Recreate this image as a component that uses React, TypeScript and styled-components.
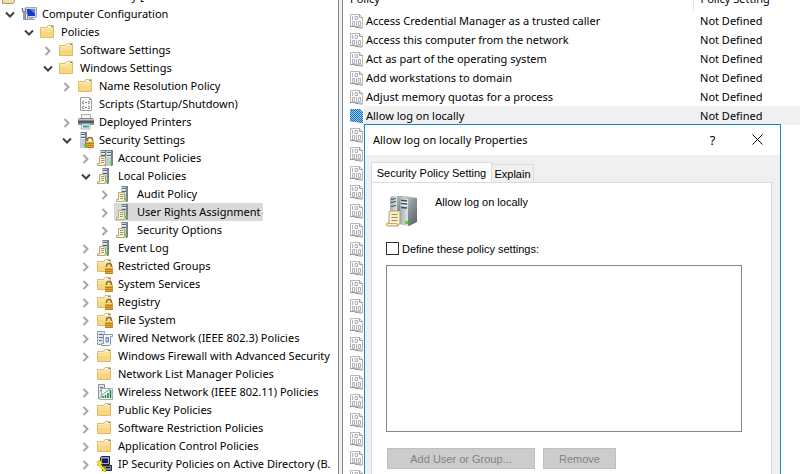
import React from 'react';
import styled, { createGlobalStyle } from 'styled-components';

const GlobalStyle = createGlobalStyle`
  * { box-sizing: border-box; }
  body { margin: 0; background: #fff; overflow: hidden; }
  #root { height: 100vh; }
  button, input, select { font: inherit; color: inherit; }
`;

const Console = styled.div`
  display: flex;
  height: 100vh;
  overflow: hidden;
  color: #000;
  font: 11px/18px 'Noto Sans', sans-serif;
`;

const TreePane = styled.nav`
  flex: 0 0 339px;
  overflow: hidden;
  border-right: 1px solid #828790;
`;

const Splitter = styled.div`
  flex: 0 0 3px;
  background: #f0f0f0;
`;

const Tree = styled.ul`
  margin: 0;
  padding: 0;
  list-style: none;
`;

const TreeRow = styled.li<{ $level: number; $clipped?: boolean }>`
  display: flex;
  align-items: ${(p) => (p.$clipped ? 'flex-end' : 'center')};
  height: ${(p) => (p.$clipped ? 5 : 18)}px;
  padding-left: ${(p) => (p.$clipped ? 0 : p.$level * 19 + 2)}px;
  overflow: hidden;
  white-space: nowrap;
`;

const Toggle = styled.button`
  flex: 0 0 15px;
  height: 18px;
  margin-right: 2px;
  padding: 0;
  border: 0;
  background: none;
  svg { display: block; }
`;

const ToggleGap = styled.span`
  flex: 0 0 17px;
`;

const TreeItem = styled.span<{ $selected?: boolean }>`
  display: flex;
  align-items: center;
  gap: 5px;
  height: 18px;
  padding: 0 2px;
  background: ${(p) => (p.$selected ? '#d9d9d9' : 'transparent')};
  svg { flex: none; }
`;

const ListPane = styled.main`
  position: relative;
  flex: 1;
  min-width: 0;
  overflow: hidden;
  border-left: 1px solid #828790;
`;

const PolicyTable = styled.table`
  width: 100%;
  table-layout: fixed;
  border-collapse: collapse;
  text-align: left;
`;

const IconColumn = styled.col`
  width: 21px;
`;

const NameColumn = styled.col`
  width: 329px;
`;

const HeadCell = styled.th<{ $divided?: boolean }>`
  padding: 0;
  font-weight: 400;
  border-right: ${(p) => (p.$divided ? '1px solid #e5e5e5' : '0')};
`;

const HeadLabel = styled.div<{ $inset: number }>`
  display: flex;
  align-items: flex-end;
  height: 11px;
  padding: 0 0 3px ${(p) => p.$inset}px;
  overflow: hidden;
`;

const PolicyRow = styled.tr`
  height: 19px;
`;

const IconCell = styled.td`
  padding: 0 0 0 7px;
  svg { display: block; }
`;

const TextCell = styled.td<{ $inset: number; $selected?: boolean }>`
  padding: 0 0 0 ${(p) => p.$inset}px;
  background: ${(p) => (p.$selected ? '#f0f0f0' : 'transparent')};
  white-space: nowrap;
`;

const Dialog = styled.section`
  position: absolute;
  top: 124px;
  right: 19px;
  bottom: 0;
  left: 21px;
  display: flex;
  flex-direction: column;
  background: #f0f0f0;
  border: 1px solid #1883d7;
  border-bottom: 0;
`;

const TitleBar = styled.header`
  display: flex;
  align-items: center;
  height: 30px;
  padding-left: 8px;
  background: #fff;
`;

const Title = styled.h1`
  flex: 1;
  margin: 0;
  font: inherit;
`;

const CaptionButton = styled.button`
  display: flex;
  align-items: center;
  justify-content: center;
  width: 45px;
  height: 30px;
  padding: 0 0 1px;
  border: 0;
  background: none;
`;

const HelpMark = styled.span`
  font-size: 13px;
`;

const TabArea = styled.div`
  display: flex;
  flex: 1;
  flex-direction: column;
  padding: 7px 8px 0 6px;
  font: 11px/14px 'Liberation Sans', sans-serif;
`;

const TabList = styled.div`
  display: flex;
  align-items: flex-end;
`;

const Tab = styled.button<{ $active?: boolean }>`
  height: ${(p) => (p.$active ? 21 : 18)}px;
  width: ${(p) => (p.$active ? 121 : 42)}px;
  margin-bottom: ${(p) => (p.$active ? -1 : 0)}px;
  padding: 0;
  border: 1px solid #dcdcdc;
  border-bottom: 0;
  border-left-width: ${(p) => (p.$active ? 1 : 0)}px;
  background: ${(p) => (p.$active ? '#fff' : '#f0f0f0')};
  white-space: nowrap;
`;

const TabPage = styled.div`
  flex: 1;
  padding: 12px 29px 0 14px;
  background: #fff;
  border: 1px solid #dcdcdc;
  border-bottom: 0;
`;

const PolicyHeading = styled.div`
  display: flex;
  gap: 16px;
  height: 47px;
`;

const PolicyName = styled.p`
  margin: 0;
`;

const CheckLabel = styled.label`
  display: flex;
  align-items: center;
  gap: 3px;
  height: 13px;
`;

const CheckBox = styled.input`
  appearance: none;
  width: 13px;
  height: 13px;
  margin: 0;
  border: 1px solid #333;
  background: #fff;
`;

const AccountList = styled.select`
  display: block;
  width: 100%;
  height: 167px;
  margin: 10px 0 16px;
  border: 1px solid #828790;
  border-radius: 0;
  background: #fff;
`;

const ButtonRow = styled.div`
  display: flex;
  gap: 8px;
  padding-left: 1px;
`;

const PushButton = styled.button<{ $wide?: boolean }>`
  width: ${(p) => (p.$wide ? 148 : 73)}px;
  height: 21px;
  padding: 0;
  border: 1px solid #bfbfbf;
  background: #ccc;
  color: #838383;
`;

/* ---------- icons ---------- */

const Chevron = ({ open }: { open: boolean }) => (
  <svg width="15" height="18" fill="none" strokeWidth="2">
    {open ? <path d="M4 7.500l4 4 4-4" stroke="#404040" /> : <path d="M5.500 6l4 4-4 4" stroke="#a6a6a6" />}
  </svg>
);

const FolderShape = () => (
  <g>
    <path d="M.5 3.500H6.500L8 1.500H13.500V13.500H.5Z" fill="#fbdf96" stroke="#dfba68" />
    <path d="M1 8H13V13H1Z" fill="#f8d57f" />
    <path d="M1 4.500H7L8.500 3.500H13" stroke="#fdedbd" fill="none" />
    <path d="M8 2.500H11" stroke="#fff" />
    <path d="M11 2.500H13" stroke="#3f97e0" />
  </g>
);

const LockShape = () => (
  <g>
    <path d="M9.500 10V8Q9.500 5.500 12 5.500T14.500 8V10" fill="none" stroke="#8d7440" strokeWidth="1.500" />
    <rect x="8" y="9" width="8" height="7" fill="#dfa935" />
    <path d="M8 11.500H16M8 13.500H16M8 15.500H16" stroke="#b98118" />
    <path d="M8 9.500H15" stroke="#f7d983" />
  </g>
);

const TowerShape = ({ x = 5 }: { x?: number }) => (
  <g transform={`translate(${x} 0)`}>
    <path d="M0 1L1 0H7V15L6 16H0Z" fill="#75838c" />
    <path d="M0 1H5V16H0Z" fill="#c3ced4" />
    <path d="M1 2.500H5M1 5.500H5" stroke="#566975" />
    <path d="M1 3.500H5M1 6.500H5" stroke="#f2f6f8" />
    <rect x="4" y="12" width="2" height="2" fill="#3fe018" />
  </g>
);

const ScrollShape = () => (
  <g>
    <path d="M2.500 6.500H8.500V13.500L7.500 15.500H.5V13.500H2.500Z" fill="#fbf2d8" stroke="#b9a67c" />
    <path d="M4 8.500H7.500M4 10.500H7.500M4 12.500H7" stroke="#a5946e" />
  </g>
);

type IconKind =
  | 'computer' | 'folder' | 'script' | 'printer' | 'serverLock' | 'servers' | 'server'
  | 'folderLock' | 'wired' | 'wireless' | 'ipsec' | 'scroll';

const drawings: Record<IconKind, React.ReactNode> = {
  folder: <FolderShape />,
  folderLock: <g><FolderShape /><LockShape /></g>,
  serverLock: <g><TowerShape x={2} /><LockShape /></g>,
  server: <g><TowerShape x={5} /><ScrollShape /></g>,
  servers: <g><TowerShape x={3} /><TowerShape x={9} /><ScrollShape /></g>,
  scroll: (
    <g>
      <path d="M3 0H14V10H3Z" fill="#f6e8bd" />
      <path d="M.5 10.500H11.500L12.500 9V13.500L11.500 15.500H.5Z" fill="#f0dfae" stroke="#b59a60" />
    </g>
  ),
  computer: (
    <g>
      <path d="M4.500 1.500H15.500V11.500H4.500Z" fill="#d5dbe2" stroke="#a2acb6" />
      <path d="M6 3H14V10H6Z" fill="#143bce" />
      <path d="M9 3H14V8Z" fill="#5f87f4" />
      <path d="M8 12H12V13H14V14H6V13H8Z" fill="#9ca6b0" />
      <path d="M1.500 2V5L3 6.500 4.500 5V2M3 6V14" fill="none" stroke="#6c8191" strokeWidth="1.500" />
      <path d="M4.500 7.500H6.500V13.500H4.500Z" fill="#eef3f7" stroke="#7d8d9b" />
    </g>
  ),
  script: (
    <g>
      <path d="M2.500 1.500H11.500L13.500 3.500V14.500H2.500Z" fill="#fafafa" stroke="#a0a0a0" />
      <path d="M11.500 1.500V3.500H13.500" fill="none" stroke="#929292" />
      <path d="M6 5L4 6.500 6 8M10 5L12 6.500 10 8M7 6.500H9M6 10L4 11.500 6 13M10 10L12 11.500 10 13M7 11.500H9" fill="none" stroke="#777" />
    </g>
  ),
  printer: (
    <g>
      <path d="M3.500 4V.5H12.500V4" fill="#f4f4f4" stroke="#b0b0b0" />
      <path d="M1 4H15L16 6V11H0V6Z" fill="#85898e" />
      <path d="M1 5H15V6H1Z" fill="#c3c7cb" />
      <path d="M0 7H16V9H0Z" fill="#54585e" />
      <path d="M4 10H12V15H3Z" fill="#f0f5fa" stroke="#a8b0b8" />
      <path d="M5 12.500H8" stroke="#2f93d2" strokeWidth="2" />
      <path d="M8 12.500H11" stroke="#4aa878" strokeWidth="2" />
      <path d="M13 10H15" stroke="#64dd37" />
    </g>
  ),
  wired: (
    <g>
      <path d="M.5 1.500H7.500V14.500H.5Z" fill="#dce4ea" stroke="#6d7c88" strokeDasharray="2 1" />
      <path d="M2 4.500H6M2 7.500H6M2 10.500H5" stroke="#5f7382" />
      <path d="M6.500 4.500H15.500V6.500H13.500V14.500L12.500 15.500H4.500V13.500H6.500Z" fill="#f7f8f9" stroke="#8796a2" />
      <path d="M9 7.500H11.500V12H9Z" fill="#bdd0e8" stroke="#5e86bc" />
    </g>
  ),
  wireless: (
    <g>
      <path d="M1.500 .5H7.500V14.500H1.500Z" fill="#dce4ea" stroke="#84919c" />
      <path d="M3 3.500H6M3 6.500H6" stroke="#5f7382" />
      <path d="M4.500 4.500H15.500V15.500H2.500V13.500H4.500Z" fill="#f5f7f5" stroke="#9fb0a5" />
      <path d="M6 14V12M8.500 14V11M11 14V9M13.500 14V6" stroke="#177a42" strokeWidth="1.500" />
      <path d="M5 11L13 5" stroke="#58b37b" />
    </g>
  ),
  ipsec: (
    <g>
      <path d="M3.500 1.500L4.500 .5H12.500V8.500H3.500Z" fill="#a4a8b4" stroke="#23252f" />
      <path d="M5 2.500H11V7H5Z" fill="#15157c" />
      <path d="M5.500 9.500H14.500V14.500H5.500Z" fill="#85858e" stroke="#23252f" />
      <path d="M9 11.500H13" stroke="#111" />
      <path d="M0 6L1 5H4L5 7 4 9 9 14 9 15.500 7 15.500 2.500 10 0 9L2 7.500Z" fill="#fff000" stroke="#9a8b00" strokeWidth=".5" />
    </g>
  ),
};

const TreeIcon = ({ kind }: { kind: IconKind }) => (
  <svg width="16" height="16" viewBox="0 0 16 16" aria-hidden="true">{drawings[kind]}</svg>
);

const PolicyIcon = ({ selected }: { selected?: boolean }) => (
  <svg width="14" height="16" viewBox="0 0 14 16" aria-hidden="true" fill="none">
    {selected && (
      <defs>
        <pattern id="dither" width="2" height="2" patternUnits="userSpaceOnUse">
          <rect width="2" height="2" fill="#a9cdea" />
          <rect width="1" height="1" fill="#0a6cb8" />
          <rect x="1" y="1" width="1" height="1" fill="#0a6cb8" />
        </pattern>
      </defs>
    )}
    {selected ? (
      <path d="M0 1H10L13 4V15H9L7 14H2L0 13Z" fill="url(#dither)" />
    ) : (
      <g>
        <path d="M.5 1.500H9.500L12.500 4.500V14.500L9.500 13.500H.5Z" fill="#fbfbfb" stroke="#b8b8b8" />
        <path d="M9.500 1.500V4.500H12.500" stroke="#a0a0a0" />
        <path d="M0 13.500H4L6 14.500H8L10 15H12.500" stroke="#999" />
        <path d="M2.500 3V7M5 3.500H7.500V6.500H5ZM2.500 8.500H4.500V12.500H2.500ZM6.500 8V13M8.500 8.500H10.500V12.500H8.500Z" stroke="#b2aebe" />
      </g>
    )}
  </svg>
);

const PropertiesIcon = () => (
  <svg width="33" height="33" viewBox="0 0 33 33" aria-hidden="true">
    <defs>
      <linearGradient id="side" x1="0" y1="0" x2="1" y2="1">
        <stop offset="0" stopColor="#dde2e4" />
        <stop offset=".5" stopColor="#8b9598" />
        <stop offset="1" stopColor="#555f62" />
      </linearGradient>
      <linearGradient id="front" x1="0" y1="0" x2="1" y2="0">
        <stop offset="0" stopColor="#a5afb3" />
        <stop offset="1" stopColor="#dce4e7" />
      </linearGradient>
    </defs>
    <path d="M4 2L6 1H19V27H4Z" fill="url(#side)" />
    <path d="M4 2L11 1V27H4Z" fill="url(#front)" />
    <path d="M5 4.500L10 3.500M5 7.500L10 6.500M5 11.500L10 10.500" stroke="#3f4d54" />
    <path d="M14 3L18 1L31 3V27L23 31L14 29Z" fill="url(#side)" />
    <path d="M14 3L22 4V31L14 29Z" fill="url(#front)" />
    <path d="M15 5.500L21 6M15 8.500L21 9M15 12.500L21 13" stroke="#3f4d54" strokeWidth="1.500" />
    <path d="M15 7L21 7.500M15 10L21 10.500" stroke="#fff" />
    <path d="M25 24L29 22M25 27L29 25" stroke="#6a7477" />
    <rect x="19" y="26" width="3" height="3" fill="#51dc16" />
    <path d="M3 17Q3 16 5 16H14V28L12 31H1Q-1 28 3 28Z" fill="#fbefc9" stroke="#b39b66" />
    <path d="M5.500 19.500H11.500M5.500 22.500H11.500M5.500 25.500H11.500" stroke="#9b8a63" />
    <path d="M2 28.500H11L12 31" fill="none" stroke="#c7ad75" />
  </svg>
);

const CloseIcon = () => (
  <svg width="11" height="11" viewBox="0 0 11 11" stroke="#000" aria-hidden="true">
    <path d="M.5 .5L10.500 10.500M10.500 .5L.5 10.500" />
  </svg>
);

/* ---------- data ---------- */

interface Node {
  level: number;
  label: string;
  icon: IconKind;
  open?: boolean;
  leaf?: boolean;
  selected?: boolean;
  clipped?: boolean;
}

const nodes: Node[] = [
  { level: 0, label: 'Default Domain Policy [', icon: 'scroll', clipped: true },
  { level: 0, label: 'Computer Configuration', icon: 'computer', open: true },
  { level: 1, label: 'Policies', icon: 'folder', open: true },
  { level: 2, label: 'Software Settings', icon: 'folder' },
  { level: 2, label: 'Windows Settings', icon: 'folder', open: true },
  { level: 3, label: 'Name Resolution Policy', icon: 'folder' },
  { level: 3, label: 'Scripts (Startup/Shutdown)', icon: 'script', leaf: true },
  { level: 3, label: 'Deployed Printers', icon: 'printer' },
  { level: 3, label: 'Security Settings', icon: 'serverLock', open: true },
  { level: 4, label: 'Account Policies', icon: 'servers' },
  { level: 4, label: 'Local Policies', icon: 'server', open: true },
  { level: 5, label: 'Audit Policy', icon: 'server' },
  { level: 5, label: 'User Rights Assignment', icon: 'server', selected: true },
  { level: 5, label: 'Security Options', icon: 'server' },
  { level: 4, label: 'Event Log', icon: 'server' },
  { level: 4, label: 'Restricted Groups', icon: 'folderLock' },
  { level: 4, label: 'System Services', icon: 'folderLock' },
  { level: 4, label: 'Registry', icon: 'folderLock' },
  { level: 4, label: 'File System', icon: 'folderLock' },
  { level: 4, label: 'Wired Network (IEEE 802.3) Policies', icon: 'wired' },
  { level: 4, label: 'Windows Firewall with Advanced Security', icon: 'folder' },
  { level: 4, label: 'Network List Manager Policies', icon: 'folder', leaf: true },
  { level: 4, label: 'Wireless Network (IEEE 802.11) Policies', icon: 'wireless' },
  { level: 4, label: 'Public Key Policies', icon: 'folder' },
  { level: 4, label: 'Software Restriction Policies', icon: 'folder' },
  { level: 4, label: 'Application Control Policies', icon: 'folder' },
  { level: 4, label: 'IP Security Policies on Active Directory (B.', icon: 'ipsec' },
];

const policies = [
  'Access Credential Manager as a trusted caller',
  'Access this computer from the network',
  'Act as part of the operating system',
  'Add workstations to domain',
  'Adjust memory quotas for a process',
  'Allow log on locally',
];

const coveredRows = Array.from({ length: 19 }, (_, i) => i);

export default function App() {
  return (
    <Console>
      <GlobalStyle />
      <TreePane aria-label="Console tree">
        <Tree>
          {nodes.map((n) => (
            <TreeRow key={n.label} $level={n.level} $clipped={n.clipped}>
              {n.leaf && <ToggleGap />}
              {!n.leaf && !n.clipped && (
                <Toggle aria-label={n.label} aria-expanded={!!n.open}>
                  <Chevron open={!!n.open} />
                </Toggle>
              )}
              <TreeItem $selected={n.selected}>
                <TreeIcon kind={n.icon} />
                {n.label}
              </TreeItem>
            </TreeRow>
          ))}
        </Tree>
      </TreePane>
      <Splitter />
      <ListPane>
        <PolicyTable>
          <colgroup>
            <IconColumn />
            <NameColumn />
            <col />
          </colgroup>
          <thead>
            <tr>
              <HeadCell colSpan={2} $divided><HeadLabel $inset={7}>Policy</HeadLabel></HeadCell>
              <HeadCell><HeadLabel $inset={7}>Policy Setting</HeadLabel></HeadCell>
            </tr>
          </thead>
          <tbody>
            {policies.map((name, i) => {
              const selected = i === policies.length - 1;
              return (
                <PolicyRow key={name}>
                  <IconCell><PolicyIcon selected={selected} /></IconCell>
                  <TextCell $inset={2} $selected={selected}>{name}</TextCell>
                  <TextCell $inset={7} $selected={selected}>Not Defined</TextCell>
                </PolicyRow>
              );
            })}
            {coveredRows.map((i) => (
              <PolicyRow key={i}>
                <IconCell><PolicyIcon /></IconCell>
              </PolicyRow>
            ))}
          </tbody>
        </PolicyTable>

        <Dialog role="dialog" aria-labelledby="dialog-title">
          <TitleBar>
            <Title id="dialog-title">Allow log on locally Properties</Title>
            <CaptionButton aria-label="Help"><HelpMark>?</HelpMark></CaptionButton>
            <CaptionButton aria-label="Close"><CloseIcon /></CaptionButton>
          </TitleBar>
          <TabArea>
            <TabList role="tablist">
              <Tab role="tab" aria-selected $active>Security Policy Setting</Tab>
              <Tab role="tab" aria-selected={false}>Explain</Tab>
            </TabList>
            <TabPage role="tabpanel">
              <PolicyHeading>
                <PropertiesIcon />
                <PolicyName>Allow log on locally</PolicyName>
              </PolicyHeading>
              <CheckLabel>
                <CheckBox type="checkbox" />
                Define these policy settings:
              </CheckLabel>
              <AccountList multiple aria-label="Users and groups" />
              <ButtonRow>
                <PushButton disabled $wide>Add User or Group...</PushButton>
                <PushButton disabled>Remove</PushButton>
              </ButtonRow>
            </TabPage>
          </TabArea>
        </Dialog>
      </ListPane>
    </Console>
  );
}
